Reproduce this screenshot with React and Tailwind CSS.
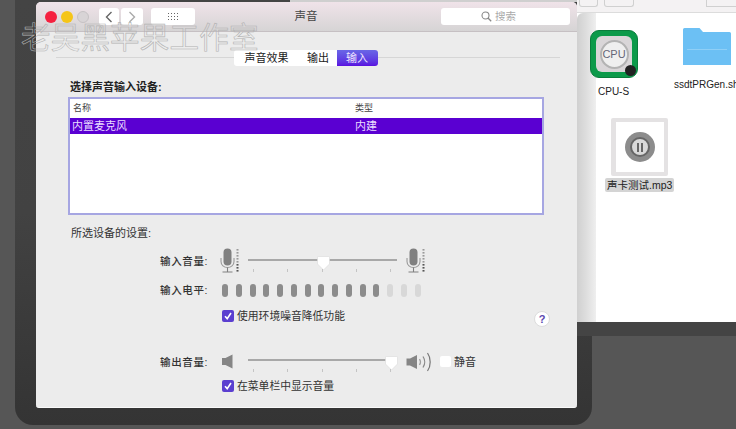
import React from 'react';

const cjk = '"Liberation Sans", "Noto Sans CJK SC", sans-serif';

const Mic = () => (
  <svg width="19" height="26" viewBox="0 0 19 26">
    <rect x="3.500" y="0.500" width="8" height="17" rx="4" fill="#808080" />
    <path d="M1 10v3.500c0 3.600 3 6 6.500 6s6.500-2.400 6.500-6V10" fill="none" stroke="#9a9a9a" strokeWidth="1.100" />
    <path d="M7.500 19.500v4M2.500 24h10" fill="none" stroke="#808080" strokeWidth="1.100" />
    {[1, 4, 7, 10, 13, 16, 19, 22].map((y, i) => (
      <rect key={y} x="16.500" y={y} width="2" height="1.600" fill={i > 4 ? '#555' : '#9a9a9a'} />
    ))}
  </svg>
);

const SpeakerSmall = () => (
  <svg width="11" height="15" viewBox="0 0 11 15">
    <path d="M0 4h3.500L10.500 0.500v14L3.500 11H0z" fill="#858585" />
  </svg>
);

const SpeakerLoud = () => (
  <svg width="27" height="20" viewBox="0 0 27 20">
    <path d="M0.500 6.500H4L11 3v14L4 13.500H0.500z" fill="#858585" />
    <path d="M13.500 7c1.200 1.800 1.200 4.200 0 6" fill="none" stroke="#a0a0a0" strokeWidth="1.300" />
    <path d="M17 4.500c2.200 3.200 2.200 7.800 0 11" fill="none" stroke="#8a8a8a" strokeWidth="1.300" />
    <path d="M21.500 1c3.600 5 3.600 13 0 18" fill="none" stroke="#777" strokeWidth="1.200" />
  </svg>
);

const Knob = () => (
  <svg width="13" height="15" viewBox="0 0 13 15">
    <path d="M1.500 0.500h10a1 1 0 0 1 1 1V8L6.500 14 .5 8V1.500a1 1 0 0 1 1-1z" fill="#fff" stroke="#dadada" strokeWidth="0.600" />
  </svg>
);

const Slider = ({ knobLeft }) => (
  <div className="relative w-[149px] h-[16px]">
    <div className="absolute left-0 right-0 top-[3px] h-[2px] bg-[#a8a8a8]" />
    <div className="absolute top-0" style={{ left: knobLeft }}>
      <Knob />
    </div>
    <div className="absolute left-[5px] right-[6px] top-[13px] flex justify-between">
      {[0, 1, 2, 3, 4].map((t) => (
        <div key={t} className="w-px h-[3px] bg-[#c4c4c4]" />
      ))}
    </div>
  </div>
);

const Check = ({ label }) => (
  <div className="flex items-center gap-[3px]">
    <div className="w-[12px] h-[12px] rounded-[2px] bg-[#5b3fd0] flex items-center justify-center">
      <svg width="10" height="10" viewBox="0 0 10 10">
        <path d="M2 5.200l2.200 2.400L8 2" fill="none" stroke="#fff" strokeWidth="1.600" />
      </svg>
    </div>
    <span className="text-[10.800px] leading-[14px] text-[#333]">{label}</span>
  </div>
);

const levels = [1, 1, 1, 1, 1, 1, 1, 1, 1, 1, 1, 1, 0, 0, 0];

const FieldLabel = ({ children, className = '' }) => (
  <div className={`w-[172px] text-right text-[10.500px] leading-[14px] tracking-[0.600px] font-medium text-[#333] ${className}`}>
    {children}
  </div>
);

const SoundWindow = () => (
  <div className="absolute left-[36px] top-[2px] w-[541px] h-[406px] bg-[#ececec] border-b border-[#fafafa] rounded-t-[5px] rounded-b-[3px] overflow-hidden flex flex-col">
    <div className="h-[30px] shrink-0 flex items-center bg-gradient-to-b from-[#f0e3e9] to-[#d6d4d5] border-b border-[#c6c0c3] pl-[9px]">
      <div className="w-[12px] h-[12px] rounded-full bg-[#f5203f]" />
      <div className="w-[12px] h-[12px] rounded-full bg-[#f5c518] ml-[4px]" />
      <div className="w-[12px] h-[12px] rounded-full bg-[#d8d4d6] border border-[#c6c2c4] ml-[4px]" />
      <div className="w-[20px] h-[17px] rounded-[3px] bg-white ml-[10px] flex items-center justify-center">
        <svg width="8" height="12" viewBox="0 0 8 12">
          <path d="M6.500 1L1.500 6l5 5" fill="none" stroke="#666" strokeWidth="1.400" />
        </svg>
      </div>
      <div className="w-[22px] h-[17px] rounded-[3px] bg-white ml-[2px] flex items-center justify-center">
        <svg width="8" height="12" viewBox="0 0 8 12">
          <path d="M1.500 1l5 5-5 5" fill="none" stroke="#aaa" strokeWidth="1.400" />
        </svg>
      </div>
      <div className="w-[44px] h-[17px] rounded-[3px] bg-white ml-[8px] flex items-center justify-center">
        <div className="grid grid-cols-4 gap-[1.500px]">
          {Array.from({ length: 12 }).map((_, i) => (
            <div key={i} className="w-[1.500px] h-[1.500px] bg-[#666]" />
          ))}
        </div>
      </div>
      <div className="flex-1 text-center text-[11.500px] text-[#444] pr-[24px]">声音</div>
      <div className="w-[129px] h-[17px] rounded-[3px] bg-white mr-[7px] flex items-center pl-[40px] gap-[3px] text-[10.500px] text-[#aaa]">
        <svg width="11" height="11" viewBox="0 0 11 11">
          <circle cx="4.500" cy="4.500" r="3.500" fill="none" stroke="#888" strokeWidth="1.100" />
          <path d="M7 7l3.200 3.200" stroke="#888" strokeWidth="1.300" />
        </svg>
        搜索
      </div>
    </div>

    <div className="relative h-[16px] mt-[18px] flex justify-center pr-[2px]">
      <div className="absolute left-[20px] right-[17px] top-[7px] h-px bg-[#d6d6d6]" />
      <div className="relative flex text-[11px] leading-[16px] text-[#222]">
        <div className="w-[66px] bg-white rounded-l-[3px] text-center">声音效果</div>
        <div className="w-[37px] bg-white text-center">输出</div>
        <div className="w-[41px] rounded-r-[3px] text-center text-[#efe6ff] bg-gradient-to-b from-[#6a66e6] to-[#5a0ce0]">输入</div>
      </div>
    </div>

    <div className="mt-[14px] ml-[34px] text-[11px] leading-[14px] font-bold text-[#222]">选择声音输入设备:</div>
    <div className="mt-[3px] ml-[32px] w-[476px] h-[118px] bg-white border-[2px] border-[#a6a6e2]">
      <div className="h-[19px] flex items-center text-[9px] text-[#444] pl-[3px]">
        <span className="w-[282px]">名称</span>
        <span>类型</span>
      </div>
      <div className="h-[16px] flex items-center text-[11px] text-[#eadcff] bg-[#5a00d2] pl-[2px]">
        <span className="w-[283px]">内置麦克风</span>
        <span>内建</span>
      </div>
    </div>

    <div className="mt-[11px] ml-[35px] text-[11px] leading-[14px] text-[#333]">所选设备的设置:</div>

    <div className="mt-[8px] flex items-start">
      <FieldLabel className="mt-[6px]">输入音量:</FieldLabel>
      <div className="ml-[12px]"><Mic /></div>
      <div className="ml-[9px] mt-[8px]"><Slider knobLeft={69} /></div>
      <div className="ml-[9px]"><Mic /></div>
    </div>

    <div className="mt-[9px] flex items-center">
      <FieldLabel>输入电平:</FieldLabel>
      <div className="ml-[14px] flex gap-[7.750px]">
        {levels.map((on, i) => (
          <div key={i} className={`w-[6px] h-[13px] rounded-[3px] ${on ? 'bg-[#8c8c8c]' : 'bg-[#d8d8d8]'}`} />
        ))}
      </div>
    </div>

    <div className="mt-[12px] ml-[186px] flex items-start pr-[27px] justify-between">
      <Check label="使用环境噪音降低功能" />
      <div className="mt-[2px] w-[16px] h-[16px] rounded-full bg-white border border-[#dcdcdc] flex items-center justify-center text-[11px] font-bold text-[#5a48b0]">?</div>
    </div>

    <div className="mt-[25px] flex items-start">
      <FieldLabel className="mt-[3px]">输出音量:</FieldLabel>
      <div className="ml-[14px] mt-[2px]"><SpeakerSmall /></div>
      <div className="ml-[15px] mt-[4px]"><Slider knobLeft={137} /></div>
      <div className="ml-[9px]"><SpeakerLoud /></div>
      <div className="ml-[7px] mt-[4px] w-[11px] h-[11px] bg-white rounded-[2px]" />
      <div className="ml-[3px] mt-[3px] text-[11px] leading-[14px] text-[#333]">静音</div>
    </div>

    <div className="mt-[7px] ml-[186px]">
      <Check label="在菜单栏中显示音量" />
    </div>
  </div>
);

const FinderWindow = () => (
  <div className="absolute left-[577px] top-0 w-[159px] h-[322px] bg-white overflow-hidden">
    <div className="h-[13px] bg-[#f4f2f3] border-b border-[#dcdcdc] flex items-start">
      <div className="ml-[2px] w-[19px] h-[7px] border border-t-0 border-[#d0d0d0] rounded-b-[3px]" />
      <div className="ml-[6px] w-[30px] h-[7px] border border-t-0 border-[#d0d0d0] rounded-b-[3px]" />
      <div className="ml-[72px] w-[30px] h-[7px] border border-t-0 border-r-0 border-[#d0d0d0]" />
    </div>
    <div className="absolute left-0 top-[13px] bottom-0 w-[19px] rounded-tl-[6px] bg-gradient-to-r from-[#d0d0d0] via-[#dedede] to-[#efefef]" />

    <div className="absolute left-[13px] top-[30px] w-[48px] h-[48px] rounded-[9px] bg-[#0c9a4a] border-[1px] border-[#0a7d3c] flex items-center justify-center">
      <div className="w-[36px] h-[36px] rounded-[6px] bg-[#d9d6d8] flex items-center justify-center">
        <div className="w-[29px] h-[29px] rounded-full bg-[#efefef] border-[2px] border-[#b3b3b3] flex items-center justify-center text-[11px] text-[#667]">CPU</div>
      </div>
      <div className="absolute right-[1px] bottom-[1px] w-[11px] h-[11px] rounded-full bg-[#222]" />
    </div>
    <div className="absolute left-[21px] top-[85px] text-[10px] leading-[13px] text-[#222]">CPU-S</div>

    <svg className="absolute left-[106px] top-[27px]" width="48" height="38" viewBox="0 0 48 38">
      <path d="M0 38V2.500A1.500 1.500 0 0 1 1.500 1h15l3.500 4h26.500A1.500 1.500 0 0 1 48 6.500V38z" fill="#6cc0f4" />
      <rect x="4" y="22" width="40" height="1" fill="#8fcff6" />
    </svg>
    <div className="absolute left-[97px] top-[78px] text-[10px] leading-[13px] text-[#222] whitespace-nowrap">ssdtPRGen.sh</div>

    <div className="absolute left-[34px] top-[118px] w-[57px] h-[58px] bg-[#e4e2e3] rounded-[2px] flex items-center justify-center">
      <div className="w-[48px] h-[50px] bg-white flex items-center justify-center">
        <div className="w-[30px] h-[30px] rounded-full bg-[#8c8c8c] flex items-center justify-center">
          <div className="w-[20px] h-[20px] rounded-full bg-[#d9d9d9] border-[2px] border-[#666] flex items-center justify-center gap-[2px]">
            <div className="w-[2px] h-[9px] bg-[#666]" />
            <div className="w-[2px] h-[9px] bg-[#666]" />
          </div>
        </div>
      </div>
    </div>
    <div className="absolute left-[28px] top-[178px] h-[14px] px-[2px] rounded-[2px] bg-[#d4d4d4] text-[10.500px] leading-[14px] text-[#222] whitespace-nowrap">声卡测试.mp3</div>
  </div>
);

export default function App() {
  return (
    <div className="relative w-[736px] h-[429px] overflow-hidden bg-[#565656]" style={{ fontFamily: cjk }}>
      <div className="absolute left-[15px] top-0 w-[577px] h-[425px] rounded-b-[18px] bg-gradient-to-b from-[#444444] via-[#424242] to-[#343434]" />
      <div className="absolute left-[577px] top-0 w-[159px] h-[336px] bg-[#444444]" />
      <div className="absolute left-[290px] top-0 w-[287px] h-[2px] bg-[#cfcfcf]" />
      <FinderWindow />
      <SoundWindow />
      <div className="absolute left-[21px] top-[19px] text-[29.500px] leading-[38px] tracking-[0.200px] whitespace-nowrap text-transparent [-webkit-text-stroke:0.600px_#b2b2b2]">
        老吴黑苹果工作室
      </div>
    </div>
  );
}
